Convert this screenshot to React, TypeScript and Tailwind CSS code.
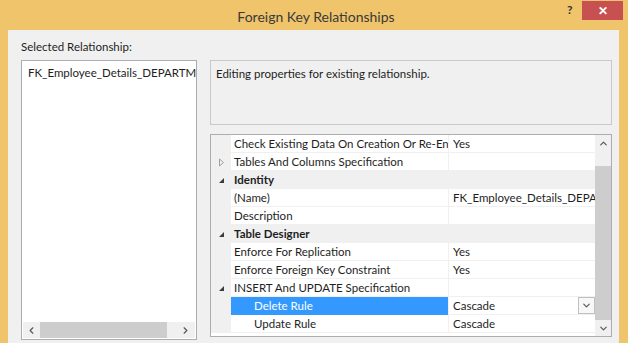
import { ChevronDown, ChevronUp, ChevronLeft, ChevronRight } from 'lucide-react';

type Row = {
  name: string;
  value?: string;
  kind?: 'category' | 'collapsed' | 'expanded' | 'child';
  selected?: boolean;
  dropdown?: boolean;
};

const rows: Row[] = [
  { name: 'Check Existing Data On Creation Or Re-Enabling', value: 'Yes' },
  { name: 'Tables And Columns Specification', kind: 'collapsed' },
  { name: 'Identity', kind: 'category' },
  { name: '(Name)', value: 'FK_Employee_Details_DEPARTMENT' },
  { name: 'Description' },
  { name: 'Table Designer', kind: 'category' },
  { name: 'Enforce For Replication', value: 'Yes' },
  { name: 'Enforce Foreign Key Constraint', value: 'Yes' },
  { name: 'INSERT And UPDATE Specification', kind: 'expanded' },
  { name: 'Delete Rule', value: 'Cascade', kind: 'child', selected: true, dropdown: true },
  { name: 'Update Rule', value: 'Cascade', kind: 'child' },
];

function FilledTriangle() {
  return (
    <svg width="7" height="7" viewBox="0 0 7 7" className="mt-[1px]">
      <path d="M6 1 L6 6 L1 6 Z" fill="#3c3c3c" />
    </svg>
  );
}

function OpenTriangle() {
  return (
    <svg width="7" height="9" viewBox="0 0 7 9">
      <path d="M1.5 1 L5.5 4.5 L1.5 8 Z" fill="none" stroke="#a0a0a0" strokeWidth="1" />
    </svg>
  );
}

function PropRow({ row }: { row: Row }) {
  const isCat = row.kind === 'category';
  const hasTri = row.kind === 'category' || row.kind === 'expanded' || row.kind === 'collapsed';
  return (
    <div className="flex h-[18px]">
      <div className="w-[20px] shrink-0 bg-[#f0f0f0] flex items-center justify-center pl-[1px]">
        {hasTri && (row.kind === 'collapsed' ? <OpenTriangle /> : <FilledTriangle />)}
      </div>
      {isCat ? (
        <div className="flex-1 bg-[#f0f0f0] flex items-center pl-[3px] font-bold">{row.name}</div>
      ) : (
        <>
          <div
            className={
              row.selected
                ? 'w-[218px] shrink-0 bg-[#3399ff] text-white flex items-center border-r border-[#f0f0f0] overflow-hidden whitespace-nowrap'
                : 'w-[218px] shrink-0 bg-white flex items-center border-r border-b border-[#f0f0f0] overflow-hidden whitespace-nowrap'
            }
          >
            <span className={row.kind === 'child' ? 'pl-[23px]' : 'pl-[3px]'}>{row.name}</span>
          </div>
          <div className="flex-1 min-w-0 bg-white flex items-center border-b border-[#f0f0f0] overflow-hidden whitespace-nowrap relative">
            <span className="pl-[4px]">{row.value}</span>
            {row.dropdown && (
              <div className="absolute right-0 top-0 w-[17px] h-[17px] border border-[#c0c0c0] bg-[#f7f7f7] flex items-center justify-center">
                <ChevronDown size={11} strokeWidth={2.5} color="#555" />
              </div>
            )}
          </div>
        </>
      )}
    </div>
  );
}

export default function App() {
  return (
    <div
      className="w-[628px] h-[343px] bg-[#efc46a] flex flex-col text-[11.5px] text-[#1e1e1e] overflow-hidden"
      style={{ fontFamily: 'Lato, "Open Sans", sans-serif' }}
    >
      <div className="h-[30px] shrink-0 flex items-start relative">
        <div className="flex-1 text-center text-[14px] text-[#3a3a3a] pt-[6px] pl-[4px]">Foreign Key Relationships</div>
        <div className="absolute left-[567px] top-[1px] text-[12px] font-bold text-[#333]">?</div>
        <div className="absolute left-[582px] top-[1px] w-[41px] h-[19px] bg-[#c75050] flex items-center justify-center text-white text-[12px] font-bold">
          ✕
        </div>
      </div>
      <div className="flex-1 min-h-0 ml-[8px] mr-[9px] bg-[#f0f0f0] flex flex-col pl-[13px] pr-[7px] pb-[3px]">
        <div className="h-[30px] flex items-center pt-[4px]">Selected Relationship:</div>
        <div className="flex-1 min-h-0 flex gap-[13px]">
          <div className="w-[176px] shrink-0 border border-[#abadb3] bg-white flex flex-col">
            <div className="flex-1 pl-[6px] pt-[3px] whitespace-nowrap overflow-hidden">FK_Employee_Details_DEPARTMENT</div>
            <div className="h-[16px] mb-[1px] mx-[1px] flex items-center bg-[#f0f0f0]">
              <div className="w-[17px] flex justify-center">
                <ChevronLeft size={11} strokeWidth={2.5} color="#555" />
              </div>
              <div className="w-[127px] h-full bg-[#cdcdcd]" />
              <div className="flex-1 flex justify-end pr-[4px]">
                <ChevronRight size={11} strokeWidth={2.5} color="#555" />
              </div>
            </div>
          </div>
          <div className="flex-1 min-w-0 flex flex-col">
            <div className="h-[65px] border border-[#c8c8c8] pl-[5px] pt-[4px]">
              Editing properties for existing relationship.
            </div>
            <div className="mt-[9px] h-[203px] border border-[#abadb3] bg-white flex overflow-hidden">
              <div className="flex-1 flex flex-col min-w-0">
                {rows.map((r) => (
                  <PropRow key={r.name} row={r} />
                ))}
              </div>
              <div className="w-[16px] shrink-0 bg-[#f0f0f0] flex flex-col">
                <div className="h-[17px] flex items-center justify-center">
                  <ChevronUp size={11} strokeWidth={2.5} color="#555" />
                </div>
                <div className="h-[14px]" />
                <div className="flex-1 bg-[#cdcdcd]" />
                <div className="h-[16px] flex items-center justify-center">
                  <ChevronDown size={11} strokeWidth={2.5} color="#555" />
                </div>
              </div>
            </div>
          </div>
        </div>
      </div>
    </div>
  );
}
